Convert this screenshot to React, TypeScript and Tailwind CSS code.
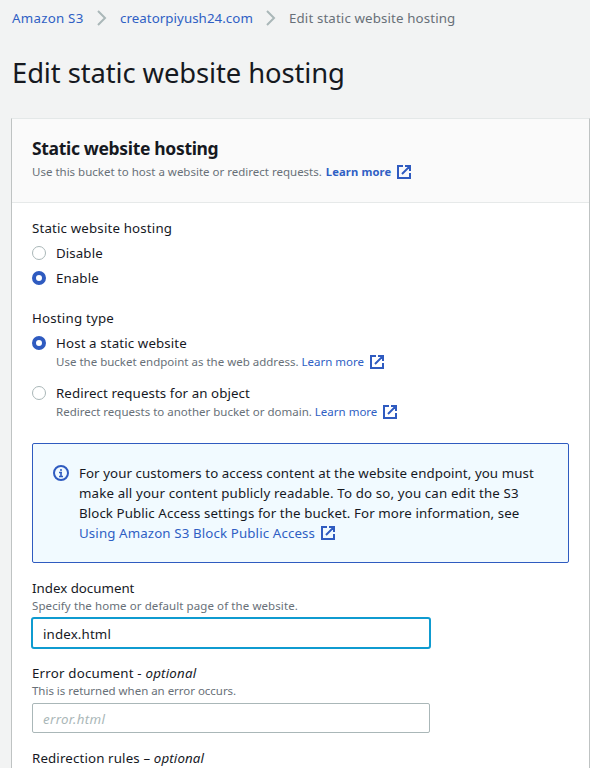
import type { ReactNode } from 'react';

function External({ className = '' }: { className?: string }) {
  return (
    <svg className={`h-[14px] w-[14px] shrink-0 ${className}`} viewBox="0 0 14 14" fill="none" stroke="#2f5bc0" strokeWidth="2">
      <path d="M6 1H1v12h12V8M8 1h5v5M12.6 1.4L5 9" />
    </svg>
  );
}

function Chevron({ className = '' }: { className?: string }) {
  return (
    <svg className={`h-4 w-[10px] shrink-0 ${className}`} viewBox="0 0 10 16" fill="none" stroke="#aab7b8" strokeWidth="2">
      <path d="M1 1l7 7-7 7" />
    </svg>
  );
}

function Radio({ checked = false }: { checked?: boolean }) {
  return checked ? (
    <span className="mr-[10px] h-[14px] w-[14px] shrink-0 rounded-full border-[4px] border-[#2f5bc0] bg-white" />
  ) : (
    <span className="mr-[10px] h-[14px] w-[14px] shrink-0 rounded-full border border-[#aab7b8] bg-white" />
  );
}

function Row({ children, className = '' }: { children: ReactNode; className?: string }) {
  return <div className={`flex h-5 items-center whitespace-nowrap text-[13.3px] leading-5 ${className}`}>{children}</div>;
}

function Hint({ children, className = '' }: { children: ReactNode; className?: string }) {
  return <div className={`flex h-4 items-center whitespace-pre text-[11.5px] leading-4 text-[#687078] ${className}`}>{children}</div>;
}

export default function App() {
  return (
    <div className="flex h-[768px] w-[590px] flex-col overflow-hidden bg-[#f2f3f3] pl-[11px] font-['Noto_Sans',sans-serif] text-[#16191f]">
      <nav className="mt-2 flex h-5 items-center whitespace-nowrap pl-px text-[13.3px] leading-5 text-[#2f5fc4]">
        <span className="w-[85px] tracking-[0.25px]">Amazon S3</span>
        <Chevron />
        <span className="ml-[13px] w-[146px] tracking-[0.06px]">creatorpiyush24.com</span>
        <Chevron />
        <span className="ml-[13px] tracking-[0.13px] text-[#687078]">Edit static website hosting</span>
      </nav>
      <h1 className="mt-[27px] h-9 whitespace-nowrap pl-px text-[27.4px] leading-9 tracking-[-0.1px]">Edit static website hosting</h1>

      <main className="mt-[27px] flex w-[579px] grow flex-col border-x border-t border-x-[#bfc3c3] border-t-[#e4e8e8] bg-white">
        <header className="h-[84px] shrink-0 border-b border-[#e6e9e9] bg-[#fafafa] pl-5 pt-[17px]">
          <h2 className="h-6 text-[17.5px] font-bold leading-6 tracking-[-0.33px]">Static website hosting</h2>
          <Hint className="mt-1">
            <span>Use this bucket to host a website or redirect requests. </span>
            <span className="ml-px text-[11.2px] font-bold tracking-[0.12px] text-[#2f5fc4]">Learn more</span>
            <External className="ml-[6px]" />
          </Hint>
        </header>

        <div className="flex flex-col pl-5 pt-[15px]">
          <Row className="tracking-[0.16px]">Static website hosting</Row>
          <Row className="mt-[5px] tracking-[0.1px]"><Radio />Disable</Row>
          <Row className="mt-[5px] tracking-[0.1px]"><Radio checked />Enable</Row>

          <Row className="mt-5 tracking-[0.2px]">Hosting type</Row>
          <Row className="mt-[5px] tracking-[0.12px]"><Radio checked />Host a static website</Row>
          <Hint className="mt-px pl-6">
            <span>Use the bucket endpoint as the web address. </span>
            <span className="text-[#2f5fc4]">Learn more</span>
            <External className="ml-[6px]" />
          </Hint>
          <Row className="mt-[13px] tracking-[0.08px]"><Radio />Redirect requests for an object</Row>
          <Hint className="mt-px pl-6">
            <span>Redirect requests to another bucket or domain. </span>
            <span className="text-[#2f5fc4]">Learn more</span>
            <External className="ml-[6px]" />
          </Hint>

          <section className="mt-[23px] flex h-[120px] w-[537px] rounded-[2px] border border-[#2f5bc0] bg-[#f1faff] pl-5 pt-[19px]">
            <svg className="mt-[2px] mr-[10px] h-4 w-4 shrink-0" viewBox="0 0 16 16" fill="none" stroke="#2f5bc0" strokeWidth="2">
              <circle cx="8" cy="8" r="7" />
              <path d="M7 5h2M6 7.5h3M8 7v5M6 11.5h4" strokeWidth="1.6" />
            </svg>
            <div>
              <Row className="tracking-[0.07px]">For your customers to access content at the website endpoint, you must</Row>
              <Row className="tracking-[0.14px]">make all your content publicly readable. To do so, you can edit the S3</Row>
              <Row className="tracking-[0.09px]">Block Public Access settings for the bucket. For more information, see</Row>
              <Row className="tracking-[0.12px] text-[#2f5fc4]">Using Amazon S3 Block Public Access<External className="ml-[6px]" /></Row>
            </div>
          </section>

          <Row className="mt-[15px]">Index document</Row>
          <Hint className="tracking-[0.09px]">Specify the home or default page of the website.</Hint>
          <div className="-ml-px mt-[3px] flex h-8 w-[400px] items-center rounded-[3px] border-2 border-[#0f9bd0] pl-[10px] pt-[2px] text-[13.3px] leading-5 tracking-[0.15px]">index.html</div>

          <Row className="mt-[14px] tracking-[0.2px]">Error document -&nbsp;<i>optional</i></Row>
          <Hint className="tracking-[-0.03px]">This is returned when an error occurs.</Hint>
          <div className="mt-1 flex h-[30px] w-[398px] items-center rounded-[2px] border border-[#aab7b8] pl-[10px] pt-[2px] text-[13.3px] leading-5 tracking-[0.35px] italic text-[#aab7b8]">error.html</div>

          <Row className="mt-[15px] tracking-[0.14px]">Redirection rules –&nbsp;<i>optional</i></Row>
        </div>
      </main>
    </div>
  );
}
